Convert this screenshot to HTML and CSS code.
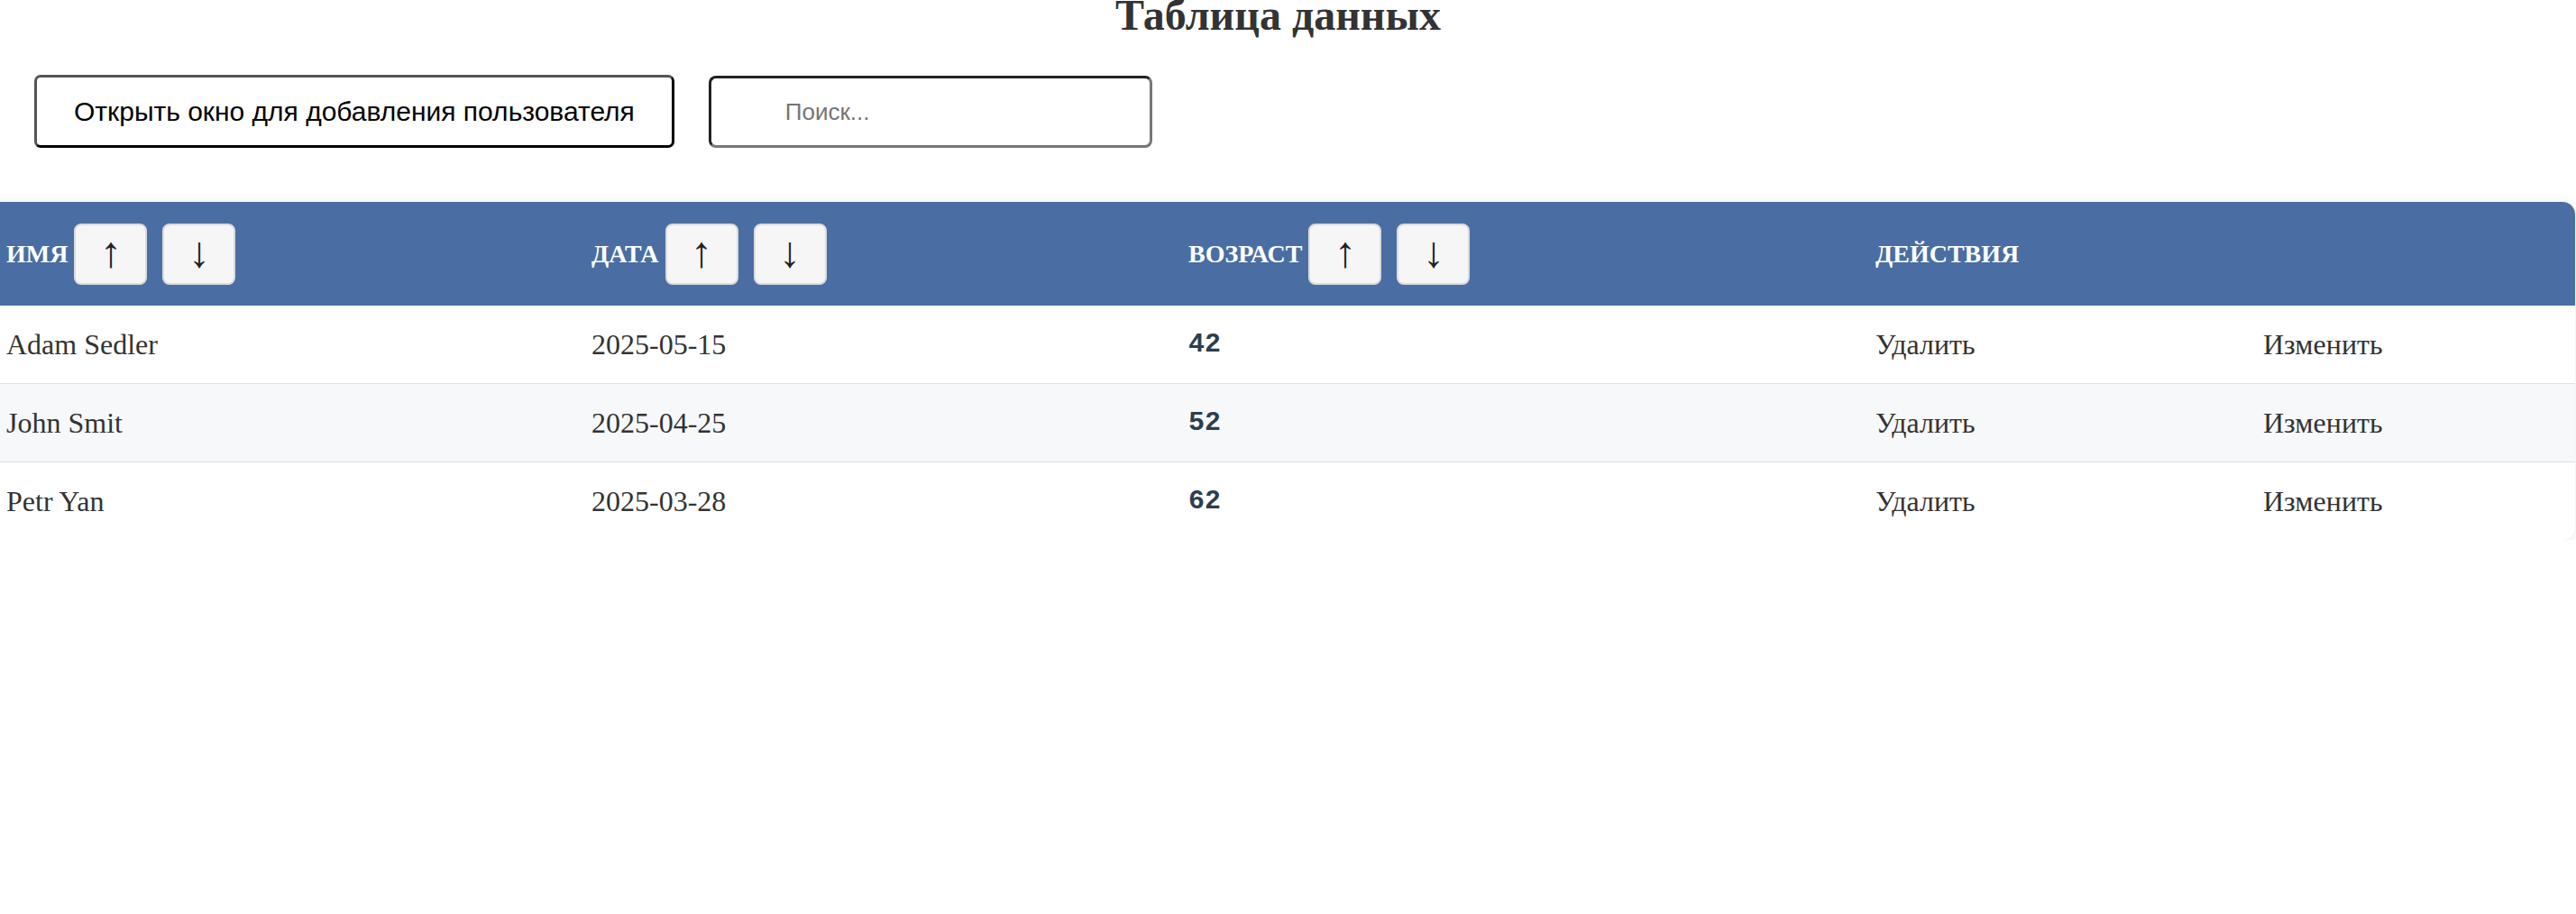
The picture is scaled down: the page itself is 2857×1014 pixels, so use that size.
FILE: index.html
```html
<!DOCTYPE html>
<html lang="ru">
<head>
<meta charset="utf-8">
<title>Таблица данных</title>
<link rel="stylesheet" href="styles.css">
</head>
<body>
<div class="page">
  <h1 class="title">Таблица данных</h1>
  <div class="toolbar">
    <button class="open-btn" type="button">Открыть окно для добавления пользователя</button>
    <input class="search" type="text" placeholder="Поиск...">
  </div>
  <div class="table-card">
    <table class="data-table">
      <colgroup>
        <col class="c-name">
        <col class="c-date">
        <col class="c-age">
        <col class="c-del">
        <col class="c-edit">
      </colgroup>
      <thead>
        <tr>
          <th><div class="th-inner"><span>Имя</span><button class="sort-btn" type="button">↑</button><button class="sort-btn" type="button">↓</button></div></th>
          <th><div class="th-inner"><span>Дата</span><button class="sort-btn" type="button">↑</button><button class="sort-btn" type="button">↓</button></div></th>
          <th><div class="th-inner"><span>Возраст</span><button class="sort-btn" type="button">↑</button><button class="sort-btn" type="button">↓</button></div></th>
          <th colspan="2"><div class="th-inner"><span>Действия</span></div></th>
        </tr>
      </thead>
      <tbody>
        <tr>
          <td>Adam Sedler</td>
          <td>2025-05-15</td>
          <td class="age">42</td>
          <td>Удалить</td>
          <td>Изменить</td>
        </tr>
        <tr class="alt">
          <td>John Smit</td>
          <td>2025-04-25</td>
          <td class="age">52</td>
          <td>Удалить</td>
          <td>Изменить</td>
        </tr>
        <tr class="last">
          <td>Petr Yan</td>
          <td>2025-03-28</td>
          <td class="age">62</td>
          <td>Удалить</td>
          <td>Изменить</td>
        </tr>
      </tbody>
    </table>
  </div>
</div>
</body>
</html>
```

FILE: styles.css
```css
html, body {
  margin: 0;
  padding: 0;
  background: #ffffff;
}

body {
  font-family: "Liberation Serif", "Times New Roman", serif;
  color: #333333;
  overflow: hidden;
}

.page {
  margin-left: -21px;
  width: calc(100% + 20px);
}

.title {
  margin: -10px 0 40px;
  text-align: center;
  font-size: 48px;
  font-weight: bold;
  color: #333333;
  line-height: 53px;
}

.toolbar {
  display: flex;
  align-items: flex-end;
  gap: 38px;
  padding-left: 59px;
  margin-bottom: 60px;
}

.open-btn {
  font-family: "Liberation Sans", Arial, sans-serif;
  font-size: 30px;
  line-height: 33px;
  color: #000000;
  background: #ffffff;
  padding: 21px 41px;
  border: 3px solid;
  border-color: #555555 #000000 #000000 #555555;
  border-radius: 7px;
}

.search {
  box-sizing: border-box;
  width: 492px;
  height: 80px;
  font-family: "Liberation Sans", Arial, sans-serif;
  font-size: 26px;
  color: #333333;
  padding: 0 20px 0 82px;
  border: 3px solid;
  border-color: #222222 #777777 #777777 #222222;
  border-radius: 8px;
  background: #ffffff;
  outline: none;
}

.search::placeholder {
  color: #757575;
}

.table-card {
  border-radius: 14px;
  overflow: hidden;
  box-shadow: 0 2px 14px rgba(0, 0, 0, 0.09);
  background: #ffffff;
}

.data-table {
  width: 100%;
  table-layout: fixed;
  border-collapse: collapse;
}

.c-name { width: 649px; }
.c-date { width: 662px; }
.c-age { width: 762px; }
.c-del { width: 430px; }

.data-table th {
  background: #4a6ea3;
  color: #ffffff;
  font-size: 28px;
  font-weight: bold;
  text-transform: uppercase;
  text-align: left;
  padding: 24px 28px 23px;
}

.th-inner {
  display: flex;
  align-items: center;
  height: 68px;
}

.th-inner span {
  margin-right: 7px;
  line-height: 32px;
}

.sort-btn {
  box-sizing: border-box;
  width: 81px;
  height: 68px;
  margin-right: 17px;
  padding: 0 0 4px;
  font-family: "Liberation Sans", Arial, sans-serif;
  font-size: 48px;
  line-height: 48px;
  color: #222222;
  background: #f6f6f6;
  border: 2px solid #dcdcdc;
  border-radius: 8px;
}

.data-table td {
  font-size: 32px;
  line-height: 38px;
  color: #333333;
  padding: 24px 28px;
  border-bottom: 1px solid #e0e0e0;
  white-space: nowrap;
}

.data-table tr.last td {
  border-bottom: none;
}

.data-table tr.alt td {
  background: #f7f8fa;
}

.data-table td.age {
  font-family: "Liberation Mono", "Courier New", monospace;
  font-weight: bold;
  font-size: 30px;
  color: #2c3e50;
}
```
